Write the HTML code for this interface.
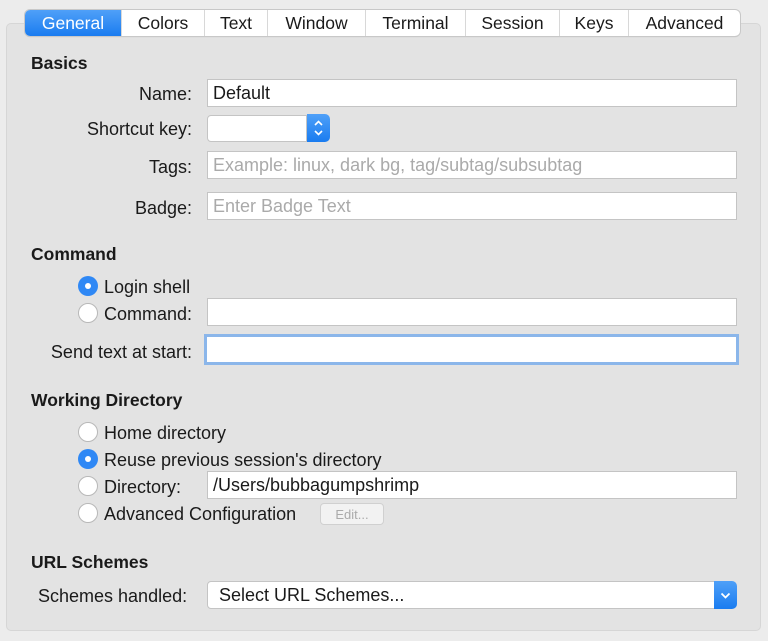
<!DOCTYPE html>
<html><head><style>
body{margin:0;width:768px;height:641px;background:#ececec;font-family:"Liberation Sans",sans-serif;font-size:18px;color:#1a1a1a;position:relative;overflow:hidden}
.a{position:absolute;white-space:nowrap}
.panel{position:absolute;left:6px;top:23px;width:753px;height:606px;background:#e3e3e3;border:1px solid #d6d6d6;border-radius:5px}
.tabs{position:absolute;left:25px;top:10px;height:26px;width:715px;display:flex;background:#fff;border-radius:5px;box-shadow:0 0 0 1px #c8c8c8,0 1px 1px rgba(0,0,0,.15);font-size:17.5px}
.tabs div{height:26px;line-height:26px;text-align:center;border-right:1px solid #d8d8d8;box-sizing:border-box}
.tabs .sel{background:linear-gradient(#4fa0f8,#1a7cf0);color:#fff;border-radius:5px 0 0 5px}
.h{font-weight:bold;font-size:17.5px}
.lbl{text-align:right;width:192px;left:0}
.in{position:absolute;background:#fff;border:1px solid #c4c4c4;box-sizing:border-box;height:28px;line-height:26px;padding-left:5px}
.ph{color:#aaa}
.r{position:absolute;width:20px;height:20px;border-radius:50%;box-sizing:border-box;background:#fff;border:1px solid #b8b8b8}
.r.on{background:#2f88f5;border:none}
.r.on:after{content:"";position:absolute;left:7px;top:7px;width:6px;height:6px;border-radius:50%;background:#fff}
.btn{position:absolute;background:linear-gradient(#4fa0f8,#1a7cf0);border-radius:0 5px 5px 0}
</style></head><body>
<div class="panel"></div>
<div class="tabs">
<div class="sel" style="width:97px">General</div><div style="width:83px">Colors</div><div style="width:63px">Text</div><div style="width:98px">Window</div><div style="width:100px">Terminal</div><div style="width:94px">Session</div><div style="width:69px">Keys</div><div style="width:111px;border:none">Advanced</div>
</div>
<div class="a h" style="left:31px;top:53px">Basics</div>
<div class="a lbl" style="top:84px">Name:</div>
<div class="in" style="left:207px;top:79px;width:530px">Default</div>
<div class="a lbl" style="top:119px">Shortcut key:</div>
<div class="in" style="left:207px;top:115px;width:100px;height:27px;border-radius:4px 0 0 4px"></div>
<div class="btn" style="left:307px;top:114px;width:23px;height:28px"><svg width="23" height="28"><path d="M8 11l3.5-3.5L15 11M8 17l3.5 3.5L15 17" stroke="#fff" stroke-width="1.6" fill="none"/></svg></div>
<div class="a lbl" style="top:157px">Tags:</div>
<div class="in ph" style="left:207px;top:151px;width:530px">Example: linux, dark bg, tag/subtag/subsubtag</div>
<div class="a lbl" style="top:198px">Badge:</div>
<div class="in ph" style="left:207px;top:192px;width:530px">Enter Badge Text</div>
<div class="a h" style="left:31px;top:244px">Command</div>
<div class="r on" style="left:78px;top:276px"></div><div class="a" style="left:104px;top:277px">Login shell</div>
<div class="r" style="left:78px;top:303px"></div><div class="a" style="left:104px;top:304px">Command:</div>
<div class="in" style="left:207px;top:298px;width:530px"></div>
<div class="a lbl" style="top:342px">Send text at start:</div>
<div class="in" style="left:204px;top:334px;width:535px;height:31px;border:3px solid #8bb6ea"></div>
<div class="a h" style="left:31px;top:390px">Working Directory</div>
<div class="r" style="left:78px;top:422px"></div><div class="a" style="left:104px;top:423px">Home directory</div>
<div class="r on" style="left:78px;top:449px"></div><div class="a" style="left:104px;top:450px">Reuse previous session's directory</div>
<div class="r" style="left:78px;top:476px"></div><div class="a" style="left:104px;top:477px">Directory:</div>
<div class="in" style="left:207px;top:471px;width:530px">/Users/bubbagumpshrimp</div>
<div class="r" style="left:78px;top:503px"></div><div class="a" style="left:104px;top:504px">Advanced Configuration</div>
<div class="a" style="left:320px;top:503px;width:64px;height:22px;background:#f2f2f2;border:1px solid #d0d0d0;border-radius:4px;color:#aaa;font-size:13px;text-align:center;line-height:22px;box-sizing:border-box">Edit...</div>
<div class="a h" style="left:31px;top:552px">URL Schemes</div>
<div class="a" style="left:38px;top:586px">Schemes handled:</div>
<div class="in" style="left:207px;top:581px;width:508px;height:28px;border-radius:4px 0 0 4px;padding-left:11px">Select URL Schemes...</div>
<div class="btn" style="left:714px;top:581px;width:23px;height:28px"><svg width="23" height="28"><path d="M7.5 12.5l4 4 4-4" stroke="#fff" stroke-width="1.8" fill="none"/></svg></div>
</body></html>
